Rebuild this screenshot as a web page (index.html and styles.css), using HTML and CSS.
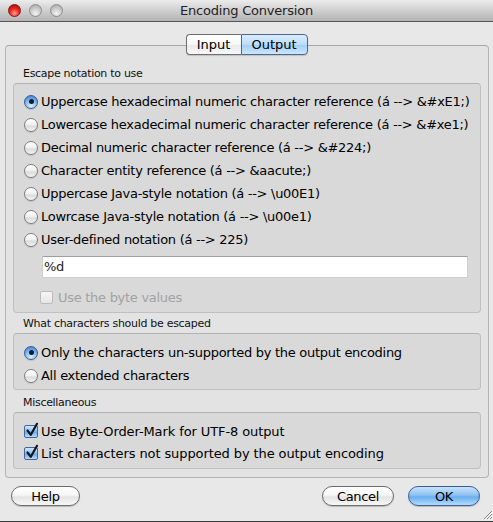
FILE: index.html
```html
<!DOCTYPE html>
<html>
<head>
<meta charset="utf-8">
<link rel="stylesheet" href="styles.css">
</head>
<body>
<div class="window">
  <div class="titlebar">
    <div class="lights">
      <span class="light close"></span>
      <span class="light"></span>
      <span class="light"></span>
    </div>
    <div class="title">Encoding Conversion</div>
    <div></div>
  </div>
  <div class="content">
    <div class="tabs">
      <span class="seg">Input</span><span class="seg sel">Output</span>
    </div>
    <div class="panel">
      <div class="label">Escape notation to use</div>
      <div class="group g1">
        <div class="row"><span class="radio on"></span><span>Uppercase hexadecimal numeric character reference (á --&gt; &amp;#xE1;)</span></div>
        <div class="row"><span class="radio"></span><span>Lowercase hexadecimal numeric character reference (á --&gt; &amp;#xe1;)</span></div>
        <div class="row"><span class="radio"></span><span>Decimal numeric character reference (á --&gt; &amp;#224;)</span></div>
        <div class="row"><span class="radio"></span><span>Character entity reference (á --&gt; &amp;aacute;)</span></div>
        <div class="row"><span class="radio"></span><span>Uppercase Java-style notation (á --&gt; \u00E1)</span></div>
        <div class="row"><span class="radio"></span><span>Lowrcase Java-style notation (á --&gt; \u00e1)</span></div>
        <div class="row"><span class="radio"></span><span>User-defined notation (á --&gt; 225)</span></div>
        <div class="field">%d</div>
        <div class="row sub disabled"><span class="check off"></span><span>Use the byte values</span></div>
      </div>
      <div class="label l2">What characters should be escaped</div>
      <div class="group g2">
        <div class="row"><span class="radio on"></span><span>Only the characters un-supported by the output encoding</span></div>
        <div class="row"><span class="radio"></span><span>All extended characters</span></div>
      </div>
      <div class="label l3">Miscellaneous</div>
      <div class="group g3">
        <div class="row crow"><span class="check on"><svg width="12" height="14" viewBox="0 0 12 14"><path d="M1.5 7.5 L4.8 11.8 L11 0.8" fill="none" stroke="#151515" stroke-width="2.2" stroke-linecap="round" stroke-linejoin="round"/></svg></span><span>Use Byte-Order-Mark for UTF-8 output</span></div>
        <div class="row crow"><span class="check on"><svg width="12" height="14" viewBox="0 0 12 14"><path d="M1.5 7.5 L4.8 11.8 L11 0.8" fill="none" stroke="#151515" stroke-width="2.2" stroke-linecap="round" stroke-linejoin="round"/></svg></span><span>List characters not supported by the output encoding</span></div>
      </div>
    </div>
    <div class="buttons">
      <span class="btn help">Help</span>
      <span class="spacer"></span>
      <span class="btn">Cancel</span>
      <span class="btn default">OK</span>
    </div>
  </div>
  <svg class="grip" width="12" height="12" viewBox="0 0 12 12">
    <path d="M11 3 L3 11 M11 6 L6 11 M11 9 L9 11" stroke="#8a8a8a" stroke-width="1"/>
    <path d="M12 4 L4 12 M12 7 L7 12 M12 10 L10 12" stroke="#f8f8f8" stroke-width="1"/>
  </svg>
</div>
</body>
</html>
```

FILE: styles.css
```css
html, body {
  margin: 0;
  padding: 0;
}
body {
  width: 493px;
  height: 522px;
  overflow: hidden;
  font-family: "DejaVu Sans", "Lucida Grande", sans-serif;
  font-size: 13px;
  color: #000;
  background: #e8e8e8;
}
.window {
  position: relative;
  height: 522px;
  box-sizing: border-box;
  border-bottom: 1px solid #3e3e3e;
  display: flex;
  flex-direction: column;
}
.titlebar {
  height: 21px;
  border-bottom: 1px solid #555;
  background: linear-gradient(#ececec, #d2d2d2 45%, #b3b3b3);
  display: grid;
  grid-template-columns: 1fr auto 1fr;
  align-items: center;
}
.lights {
  display: flex;
  gap: 8px;
  padding-left: 8px;
}
.light {
  width: 13px;
  height: 13px;
  box-sizing: border-box;
  border-radius: 50%;
  border: 1px solid #8f8f8f;
  background: radial-gradient(circle at 50% 75%, #f2f2f2, #cfcfcf 45%, #a9a9a9 90%);
}
.light.close {
  border-color: #7d1717;
  background: radial-gradient(circle at 50% 75%, #ff9d90, #ee2a20 45%, #a80b07 90%);
}
.title {
  font-size: 13px;
  color: #222;
  letter-spacing: -0.2px;
}
.content {
  flex: 1;
  display: flex;
  flex-direction: column;
  padding-top: 12px;
}
.tabs {
  position: relative;
  z-index: 1;
  display: flex;
  justify-content: center;
  height: 21px;
}
.seg {
  height: 21px;
  box-sizing: border-box;
  display: flex;
  align-items: center;
  justify-content: center;
  font-size: 13px;
  border: 1px solid #6d6d6d;
  width: 55px;
  border-right: none;
  border-radius: 4px 0 0 4px;
  background: linear-gradient(#ffffff, #f7f7f7 50%, #ebebeb 55%, #f8f8f8);
  box-shadow: 0 1px 1px rgba(0,0,0,0.15);
}
.seg.sel {
  width: 67px;
  border: 1px solid #4f6790;
  border-radius: 0 4px 4px 0;
  background: linear-gradient(#d9edfd, #bcdcfa 50%, #a4d0f8 55%, #cae7fd);
}
.panel {
  margin: -10px 4px 0 5px;
  border: 1px solid #b4b4b4;
  border-top-color: #a6a6a6;
  border-radius: 4px;
  background: #e3e3e3;
  padding: 16px 7px 8px 7px;
}
.label {
  font-size: 11px;
  line-height: 14px;
  padding-left: 10px;
  margin: 5px 0 2px;
  color: #111;
  letter-spacing: -0.3px;
}
.label.l2 {
  margin-top: 4px;
}
.label.l3 {
  margin-top: 6px;
}
.group {
  border: 1px solid #c0c0c0;
  border-top-color: #b3b3b3;
  border-radius: 4px;
  background: #d9d9d9;
}
.g1 {
  padding: 6px 0 5px;
}
.g2 {
  padding: 7px 0 2px;
}
.g3 {
  padding: 7px 0 4px;
}
.row {
  display: flex;
  align-items: center;
  height: 23px;
  padding-left: 10px;
  gap: 3px;
  white-space: nowrap;
  letter-spacing: -0.28px;
}
.crow {
  height: 22px;
  letter-spacing: -0.1px;
}
.row.sub {
  height: 20px;
  margin-top: 9px;
  padding-left: 26px;
  gap: 5px;
}
.row.disabled {
  color: #a2a2a2;
}
.radio {
  position: relative;
  flex: none;
  width: 14px;
  height: 14px;
  box-sizing: border-box;
  border-radius: 50%;
  border: 1px solid #7e7e7e;
  background: linear-gradient(#ffffff, #f1f1f1 45%, #dcdcdc 60%, #f4f4f4);
  box-shadow: 0 1px 1px rgba(0,0,0,0.12);
  display: flex;
  align-items: center;
  justify-content: center;
}
.radio.on {
  border-color: #3d5c8f;
  background: radial-gradient(circle at 50% 85%, #d6efff, #8cc3f5 45%, #4f8fde 80%);
}
.radio.on::after {
  content: "";
  width: 5px;
  height: 5px;
  border-radius: 50%;
  background: #1a1a2a;
}
.check {
  position: relative;
  flex: none;
  width: 13px;
  height: 13px;
  box-sizing: border-box;
  border-radius: 2px;
}
.check.off {
  border: 1px solid #bcbcbc;
  background: linear-gradient(#f6f6f6, #e6e6e6);
}
.check.on {
  width: 14px;
  height: 13px;
  border: 1px solid #45659a;
  background: linear-gradient(#cfe7fd, #8cc2f6 45%, #69aaf0 55%, #b4dcfd);
}
.check.on svg {
  position: absolute;
  left: 1px;
  top: -3px;
  overflow: visible;
}
.field {
  margin: 5px 12px 0 28px;
  height: 22px;
  box-sizing: border-box;
  background: #fff;
  border: 1px solid #cfcfcf;
  border-top-color: #a0a0a0;
  padding-left: 1px;
  line-height: 20px;
  color: #222;
  letter-spacing: -0.3px;
}
.buttons {
  display: flex;
  align-items: center;
  margin-top: 8px;
  padding: 0 13px 0 11px;
  gap: 14px;
}
.spacer {
  flex: 1;
}
.btn {
  width: 72px;
  height: 20px;
  box-sizing: border-box;
  border: 1px solid #6c6c6c;
  border-radius: 10px;
  display: flex;
  align-items: center;
  justify-content: center;
  font-size: 13px;
  letter-spacing: -0.3px;
  background: linear-gradient(#ffffff, #f6f6f6 45%, #e4e4e4 55%, #f7f7f7);
  box-shadow: 0 1px 1px rgba(0,0,0,0.2);
}
.btn.help {
  width: 69px;
}
.btn.default {
  border-color: #3c5e95;
  background: linear-gradient(#c9e3fb, #8ec2f3 45%, #6aaeef 55%, #b3dcfd);
}
.grip {
  position: absolute;
  right: 0;
  bottom: 1px;
}
```
